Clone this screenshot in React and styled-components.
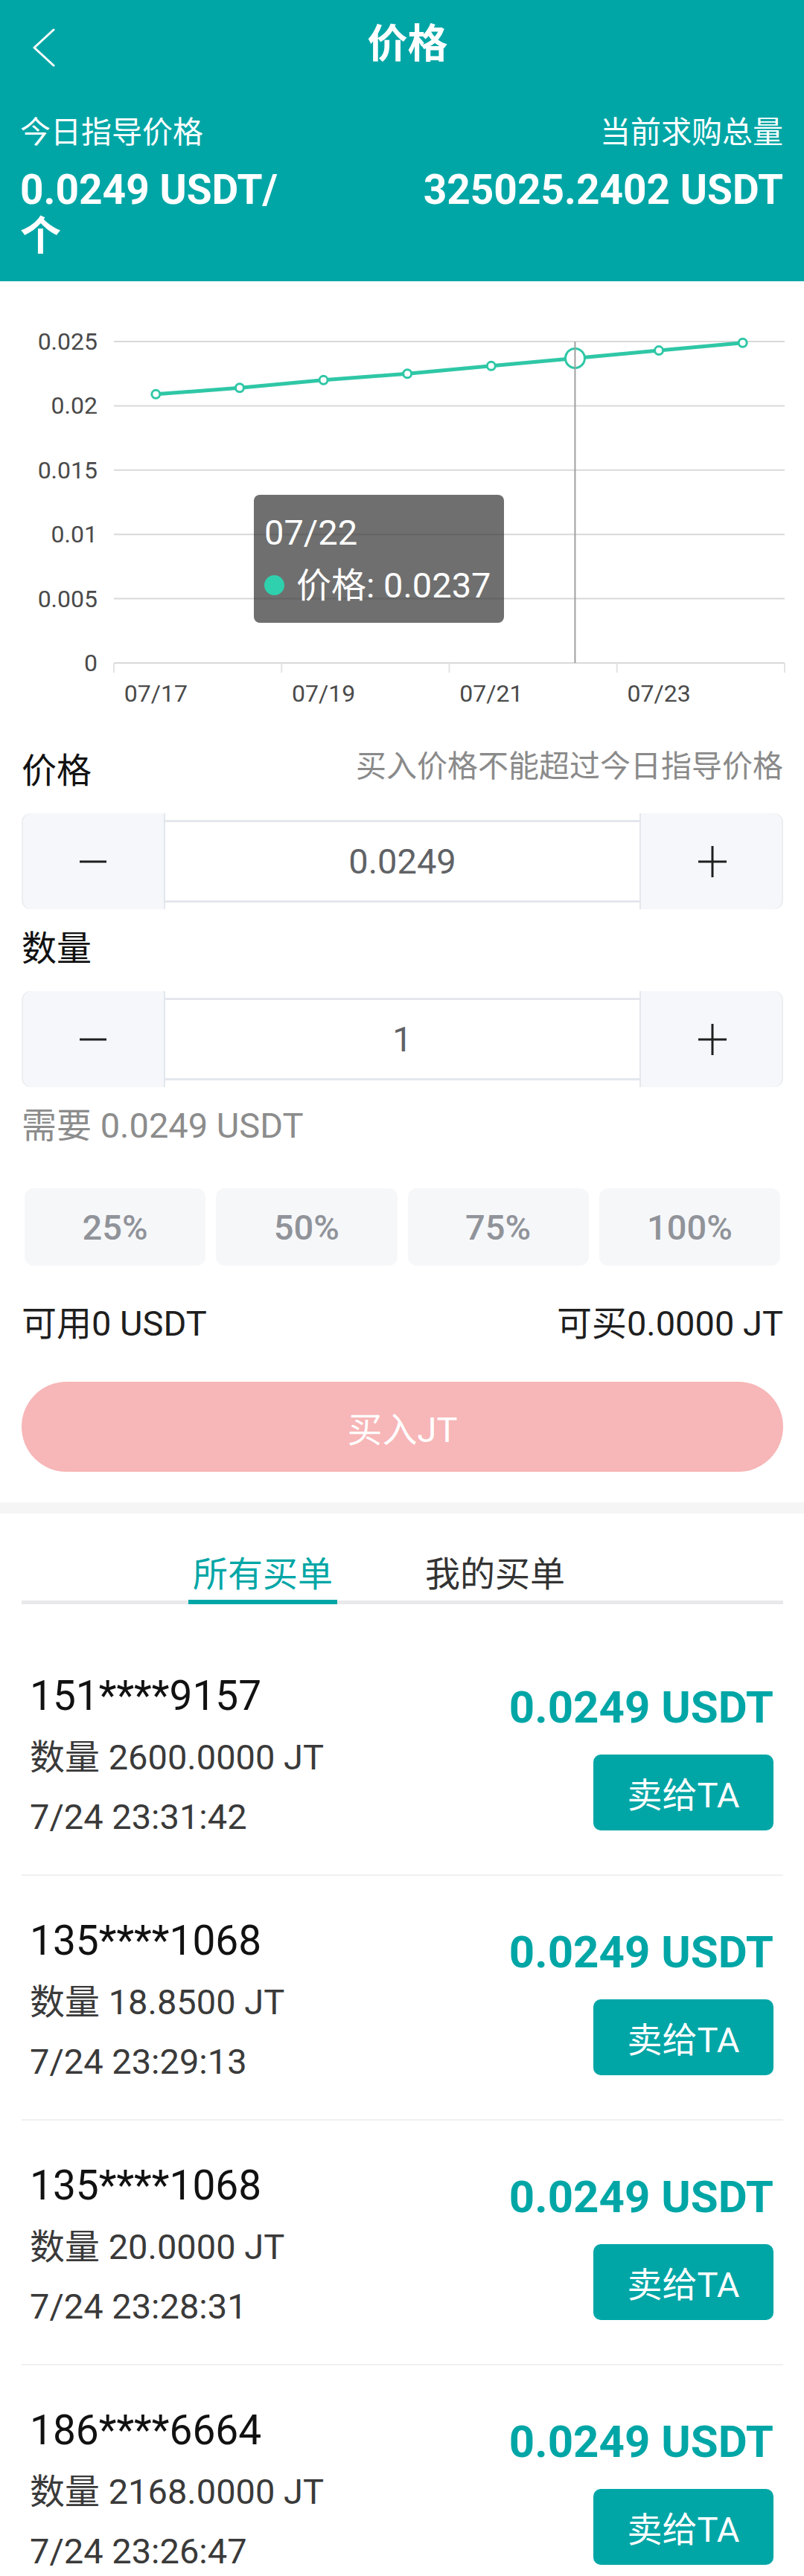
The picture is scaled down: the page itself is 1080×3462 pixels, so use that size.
import React from 'react';
import styled, { createGlobalStyle } from 'styled-components';

const TEAL = '#00a6a6';
const LINE = '#2fc7a6';

const GlobalStyle = createGlobalStyle`
  html, body { margin: 0; padding: 0; background: #fff; }
  body {
    width: 1080px;
    font-family: Roboto, "Noto Sans CJK SC", "Noto Sans", sans-serif;
    -webkit-font-smoothing: antialiased;
  }
  * { box-sizing: border-box; }
`;

const Page = styled.div`
  width: 1080px;
  background: #fff;
`;

/* ---------- header ---------- */
const Header = styled.header`
  background: ${TEAL};
  color: #fff;
  padding-bottom: 30px;
`;
const NavBar = styled.div`
  display: grid;
  grid-template-columns: 1fr auto 1fr;
  align-items: center;
  height: 120px;
  padding: 0 29px 0 44px;
`;
const BackIcon = styled.svg`
  display: block;
  margin-top: 7px;
`;
const Title = styled.h1`
  margin: 0;
  font-size: 54px;
  font-weight: 700;
  line-height: 120px;
`;
const Summary = styled.div`
  display: flex;
  justify-content: space-between;
  padding: 30px 28px 0 27px;
`;
const SummaryCol = styled.div`
  display: flex;
  flex-direction: column;
  align-items: ${(p) => (p.$right ? 'flex-end' : 'flex-start')};
  text-align: ${(p) => (p.$right ? 'right' : 'left')};
  max-width: ${(p) => (p.$right ? 'none' : '370px')};
`;
const SummaryLabel = styled.div`
  font-size: 41px;
  line-height: 56px;
  margin-bottom: 18px;
`;
const SummaryValue = styled.div`
  font-size: 55px;
  font-weight: 700;
  line-height: 62px;
`;

/* ---------- chart ---------- */
const ChartBox = styled.section`
  position: relative;
  height: 623px;
`;
const ChartSvg = styled.svg`
  display: block;
  font-family: Roboto, "Noto Sans CJK SC", sans-serif;
`;
const Tooltip = styled.div`
  position: absolute;
  left: 341px;
  top: 287px;
  padding: 15px 17px 15px 14px;
  background: rgba(50, 50, 50, 0.7);
  border-radius: 8px;
  color: #fff;
  font-size: 47px;
  line-height: 71px;
  white-space: nowrap;
`;
const TipRow = styled.div`
  display: flex;
  align-items: center;
`;
const TipDot = styled.span`
  width: 27px;
  height: 27px;
  border-radius: 50%;
  background: #2fd0ad;
  margin-right: 16px;
  flex: none;
`;

/* ---------- form ---------- */
const Form = styled.section`
  padding: 0 28px 41px 29px;
`;
const LabelRow = styled.div`
  display: flex;
  justify-content: space-between;
  align-items: flex-start;
  margin-top: ${(p) => p.$mt || 0}px;
`;
const FieldLabel = styled.div`
  font-size: 47px;
  line-height: 70px;
  color: #111;
`;
const Hint = styled.div`
  font-size: 41px;
  line-height: 58px;
  color: #8a8a8a;
`;
const Stepper = styled.div`
  display: flex;
  align-items: center;
  height: 129px;
  margin-top: 22px;
`;
const StepBtn = styled.div`
  flex: none;
  width: 193px;
  height: 129px;
  display: flex;
  align-items: center;
  justify-content: center;
  background: #f5f7fa;
  border-radius: ${(p) => (p.$side === 'left' ? '12px 0 0 12px' : '0 12px 12px 0')};
  border-${(p) => (p.$side === 'left' ? 'right' : 'left')}: 2px solid #e4e7ed;
  box-shadow: inset ${(p) => (p.$side === 'left' ? '2px' : '-2px')} 0 0 #eceef2;
`;
const StepValue = styled.div`
  flex: 1;
  height: 111px;
  display: flex;
  align-items: center;
  justify-content: center;
  border-top: 3px solid #e4e7ed;
  border-bottom: 3px solid #e4e7ed;
  background: #fff;
  color: #606266;
  font-size: 47px;
`;
const Need = styled.div`
  margin-top: 22px;
  font-size: 47px;
  line-height: 60px;
  color: #8c8c8c;
`;
const Percents = styled.div`
  display: grid;
  grid-template-columns: repeat(4, 1fr);
  gap: 14px;
  padding: 0 4px;
  margin-top: 54px;
`;
const PercentBtn = styled.div`
  height: 104px;
  border-radius: 12px;
  background: #f6f7f9;
  color: #909399;
  font-size: 47px;
  font-weight: 500;
  display: flex;
  align-items: center;
  justify-content: center;
`;
const Balance = styled.div`
  display: flex;
  justify-content: space-between;
  margin-top: 48px;
  font-size: 47px;
  line-height: 60px;
  color: #1e1e1e;
`;
const BuyButton = styled.div`
  margin-top: 48px;
  height: 121px;
  border-radius: 61px;
  background: #f7b6b7;
  color: #fff;
  font-size: 47px;
  display: flex;
  align-items: center;
  justify-content: center;
`;
const Divider = styled.div`
  height: 15px;
  background: #f5f5f5;
`;

/* ---------- tabs + list ---------- */
const TabsSection = styled.section`
  padding-top: 52px;
`;
const TabBar = styled.div`
  display: flex;
  gap: 112px;
  margin: 0 28px 0 29px;
  padding-left: 224px;
  border-bottom: 5px solid #e9e9eb;
`;
const Tab = styled.div`
  width: 200px;
  text-align: center;
  font-size: 47px;
  line-height: 60px;
  padding-bottom: 4px;
  margin-bottom: -5px;
  color: ${(p) => (p.$active ? TEAL : '#333')};
  border-bottom: 6px solid ${(p) => (p.$active ? TEAL : 'transparent')};
`;
const List = styled.div`
  padding: 36px 28px 0 29px;
`;
const Row = styled.div`
  display: flex;
  justify-content: space-between;
  align-items: center;
  padding: 44px 13px 37px 11px;
  border-bottom: 2px solid #f0f0f0;
`;
const RowLeft = styled.div`
  display: flex;
  flex-direction: column;
`;
const Phone = styled.div`
  font-size: 55px;
  line-height: 86px;
  color: #111;
`;
const Meta = styled.div`
  font-size: 47px;
  line-height: 80px;
  color: #3a3a3a;
`;
const RowRight = styled.div`
  display: flex;
  flex-direction: column;
  align-items: flex-end;
`;
const Price = styled.div`
  font-size: 60px;
  font-weight: 700;
  line-height: 72px;
  color: ${TEAL};
`;
const SellBtn = styled.div`
  margin-top: 27px;
  width: 242px;
  height: 102px;
  border-radius: 10px;
  background: ${TEAL};
  color: #fff;
  font-size: 47px;
  display: flex;
  align-items: center;
  justify-content: center;
`;

/* ---------- data ---------- */
const values = [0.0209, 0.0214, 0.022, 0.0225, 0.0231, 0.0237, 0.0243, 0.0249];
const X0 = 153;
const X1 = 1054;
const GTOP = 81;
const GBOT = 513;
const CW = (X1 - X0) / 8;
const px = (i) => X0 + (i + 0.5) * CW;
const py = (v) => GBOT - (v / 0.025) * (GBOT - GTOP);
const yLabels = ['0.025', '0.02', '0.015', '0.01', '0.005', '0'];
const xLabels = [
  { i: 0, t: '07/17' },
  { i: 2, t: '07/19' },
  { i: 4, t: '07/21' },
  { i: 6, t: '07/23' },
];

const orders = [
  { phone: '151****9157', qty: '2600.0000', time: '7/24 23:31:42' },
  { phone: '135****1068', qty: '18.8500', time: '7/24 23:29:13' },
  { phone: '135****1068', qty: '20.0000', time: '7/24 23:28:31' },
  { phone: '186****6664', qty: '2168.0000', time: '7/24 23:26:47' },
];

function MinusIcon() {
  return (
    <svg width="36" height="4" viewBox="0 0 36 4">
      <line x1="0" y1="2" x2="36" y2="2" stroke="#1f1f1f" strokeWidth="3" />
    </svg>
  );
}
function PlusIcon() {
  return (
    <svg width="38" height="42" viewBox="0 0 38 42">
      <line x1="0" y1="21" x2="38" y2="21" stroke="#1f1f1f" strokeWidth="3" />
      <line x1="19" y1="0" x2="19" y2="42" stroke="#1f1f1f" strokeWidth="3" />
    </svg>
  );
}

function Chart() {
  const pts = values.map((v, i) => `${px(i)},${py(v)}`).join(' ');
  return (
    <ChartBox>
      <ChartSvg width="1080" height="623" viewBox="0 0 1080 623">
        {yLabels.map((t, k) => {
          const y = GTOP + (k * (GBOT - GTOP)) / 5;
          return (
            <g key={t}>
              <line x1={X0} y1={y} x2={X1} y2={y} stroke="#d9d9d9" strokeWidth="2" />
              <text x="131" y={y + 11} textAnchor="end" fontSize="32" fill="#4a4a4a">
                {t}
              </text>
            </g>
          );
        })}
        {[0, 1, 2, 3, 4].map((k) => {
          const x = X0 + k * CW * 2;
          return <line key={k} x1={x} y1={GBOT} x2={x} y2={GBOT + 13} stroke="#e3e3e3" strokeWidth="2" />;
        })}
        {xLabels.map(({ i, t }) => (
          <text key={t} x={px(i)} y="565" textAnchor="middle" fontSize="32" fill="#4a4a4a">
            {t}
          </text>
        ))}
        <polyline points={pts} fill="none" stroke={LINE} strokeWidth="5" strokeLinejoin="round" strokeLinecap="round" />
        {values.map((v, i) =>
          i === 5 ? (
            <circle key={i} cx={px(i)} cy={py(v)} r="13" fill="#fff" stroke={LINE} strokeWidth="3" />
          ) : (
            <circle key={i} cx={px(i)} cy={py(v)} r="5.5" fill="#fff" stroke={LINE} strokeWidth="3" />
          )
        )}
        <line x1={px(5)} y1={GTOP} x2={px(5)} y2={GBOT} stroke="#a0a0a0" strokeWidth="2" />
      </ChartSvg>
      <Tooltip>
        <div>07/22</div>
        <TipRow>
          <TipDot />
          <span>价格: 0.0237</span>
        </TipRow>
      </Tooltip>
    </ChartBox>
  );
}

export default function App() {
  return (
    <Page>
      <GlobalStyle />
      <Header>
        <NavBar>
          <BackIcon width="30" height="52" viewBox="0 0 30 52">
            <polyline points="28,2 2,26 28,50" fill="none" stroke="#fff" strokeWidth="3" strokeLinecap="round" strokeLinejoin="round" />
          </BackIcon>
          <Title>价格</Title>
          <span />
        </NavBar>
        <Summary>
          <SummaryCol>
            <SummaryLabel>今日指导价格</SummaryLabel>
            <SummaryValue>
              0.0249 USDT/<wbr />个
            </SummaryValue>
          </SummaryCol>
          <SummaryCol $right>
            <SummaryLabel>当前求购总量</SummaryLabel>
            <SummaryValue>325025.2402 USDT</SummaryValue>
          </SummaryCol>
        </Summary>
      </Header>

      <Chart />

      <Form>
        <LabelRow>
          <FieldLabel>价格</FieldLabel>
          <Hint>买入价格不能超过今日指导价格</Hint>
        </LabelRow>
        <Stepper>
          <StepBtn $side="left">
            <MinusIcon />
          </StepBtn>
          <StepValue>0.0249</StepValue>
          <StepBtn $side="right">
            <PlusIcon />
          </StepBtn>
        </Stepper>
        <LabelRow $mt={18}>
          <FieldLabel>数量</FieldLabel>
        </LabelRow>
        <Stepper>
          <StepBtn $side="left">
            <MinusIcon />
          </StepBtn>
          <StepValue>1</StepValue>
          <StepBtn $side="right">
            <PlusIcon />
          </StepBtn>
        </Stepper>
        <Need>需要 0.0249 USDT</Need>
        <Percents>
          {['25%', '50%', '75%', '100%'].map((p) => (
            <PercentBtn key={p}>{p}</PercentBtn>
          ))}
        </Percents>
        <Balance>
          <span>可用0 USDT</span>
          <span>可买0.0000 JT</span>
        </Balance>
        <BuyButton>买入JT</BuyButton>
      </Form>

      <Divider />

      <TabsSection>
        <TabBar>
          <Tab $active>所有买单</Tab>
          <Tab>我的买单</Tab>
        </TabBar>
        <List>
          {orders.map((o, i) => (
            <Row key={i}>
              <RowLeft>
                <Phone>{o.phone}</Phone>
                <Meta>数量 {o.qty} JT</Meta>
                <Meta>{o.time}</Meta>
              </RowLeft>
              <RowRight>
                <Price>0.0249 USDT</Price>
                <SellBtn>卖给TA</SellBtn>
              </RowRight>
            </Row>
          ))}
        </List>
      </TabsSection>
    </Page>
  );
}
